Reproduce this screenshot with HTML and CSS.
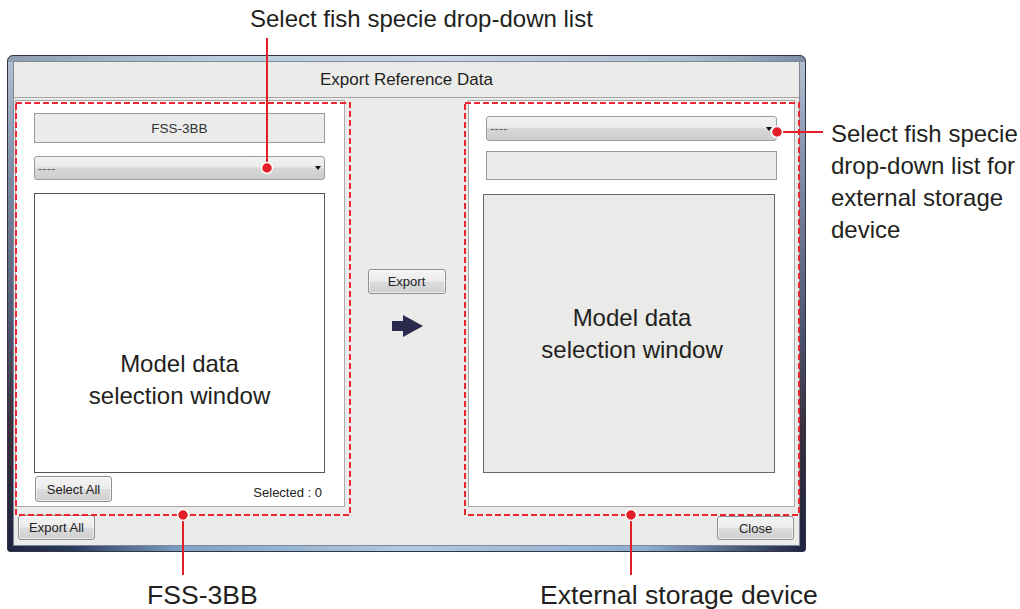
FILE: index.html
```html
<!DOCTYPE html>
<html lang="en">
<head>
<meta charset="utf-8">
<title>Export Reference Data</title>
<link rel="stylesheet" href="styles.css">
</head>
<body>
<div class="page">
  <div class="top-label">Select fish specie drop-down list</div>
  <div class="row">
    <div class="dialog">
      <div class="win">
        <div class="title">Export Reference Data</div>
        <div class="body">
          <div class="panel panel-left">
            <div class="model-box">FSS-3BB</div>
            <div class="combo"><span class="combo-text">----</span><span class="caret"></span></div>
            <div class="list list-left">
              <div class="note">Model data<br>selection window</div>
            </div>
            <div class="panel-foot">
              <button class="btn btn-select">Select All</button>
              <span class="selected">Selected : 0</span>
            </div>
          </div>
          <div class="middle">
            <button class="btn btn-export">Export</button>
            <svg class="arrow" width="31" height="22" viewBox="0 0 31 22"><path d="M0 6 H11 V0 L31 11 L11 22 V16 H0 Z" fill="#2b2a4c"/></svg>
          </div>
          <div class="panel panel-right">
            <div class="combo combo-right"><span class="combo-text">----</span><span class="caret"></span></div>
            <div class="textbox"></div>
            <div class="list list-right">
              <div class="note">Model data<br>selection window</div>
            </div>
          </div>
        </div>
        <div class="footer">
          <button class="btn btn-exportall">Export All</button>
          <button class="btn btn-close">Close</button>
        </div>
      </div>
    </div>
    <div class="side-note">Select fish specie<br>drop-down list for<br>external storage<br>device</div>
  </div>
  <div class="bottom-labels">
    <div>FSS-3BB</div>
    <div>External storage device</div>
  </div>
  <svg class="callouts" width="1020" height="609" viewBox="0 0 1020 609">
    <g fill="none" stroke="#ec2630" stroke-width="2" stroke-dasharray="6 3">
      <rect x="16" y="103" width="334" height="412"/>
      <rect x="465" y="103" width="334" height="412"/>
    </g>
    <g stroke="#e31e26" stroke-width="2">
      <line x1="267" y1="38" x2="267" y2="168"/>
      <line x1="777" y1="132" x2="823" y2="132"/>
      <line x1="183" y1="515" x2="183" y2="575"/>
      <line x1="631" y1="515" x2="631" y2="575"/>
    </g>
    <g fill="#e31e26" stroke="#ffffff" stroke-width="1.5">
      <circle cx="267" cy="168" r="5.5"/>
      <circle cx="777" cy="132" r="5.5"/>
      <circle cx="183" cy="515" r="5.5"/>
      <circle cx="631" cy="515" r="5.5"/>
    </g>
  </svg>
</div>
</body>
</html>
```
FILE: styles.css
```css
body {
  margin: 0;
  background: #ffffff;
  font-family: "Liberation Sans", Arial, sans-serif;
  color: #231f20;
}

.page {
  position: relative;
  width: 1020px;
  height: 609px;
  overflow: hidden;
}

.top-label {
  height: 55px;
  box-sizing: border-box;
  padding: 5px 0 0 250px;
  font-size: 24px;
  line-height: 28px;
  white-space: nowrap;
}

.row {
  display: flex;
  align-items: flex-start;
}

.dialog {
  margin-left: 7px;
  width: 799px;
  height: 497px;
  box-sizing: border-box;
  padding: 5px;
  border: 1px solid #2e3548;
  border-radius: 6px 6px 3px 3px;
  background:
    linear-gradient(90deg, #8e9db2 0%, #b9cbdd 25%, #c9d7e5 55%, #aebfd2 85%, #7d8ca3 100%) top / 100% 6px no-repeat,
    linear-gradient(90deg, #1d2340 0%, #2c3a5c 8%, #7fa2c6 22%, #b2c9e0 50%, #8eaed0 80%, #1d2340 100%) bottom / 100% 6px no-repeat,
    linear-gradient(180deg, #b3c2d3 0%, #7b8aa2 25%, #4d5670 55%, #3a2f3c 75%, #1e2440 100%);
}

.win {
  height: 100%;
  box-sizing: border-box;
  border: 1px solid #7e8898;
  background: #ebebe9;
  display: flex;
  flex-direction: column;
}

.title {
  height: 35px;
  flex: none;
  border-bottom: 1px solid #a3a3a3;
  display: flex;
  align-items: center;
  justify-content: center;
  font-size: 17px;
  color: #1e1e1e;
}

.body {
  display: flex;
  height: 409px;
  flex: none;
  box-sizing: border-box;
  padding: 2px 0 0 1px;
}

.panel {
  background: #ffffff;
  border: 1px solid #a9a9a9;
  box-sizing: border-box;
  height: 407px;
  display: flex;
  flex-direction: column;
}

.panel-left {
  width: 330px;
  padding: 12px 0 0 18px;
}

.panel-right {
  width: 327px;
  padding: 15px 0 0 14px;
}

.middle {
  width: 123px;
  display: flex;
  flex-direction: column;
  align-items: center;
  padding-top: 169px;
  box-sizing: border-box;
}

.arrow {
  margin-top: 21px;
  margin-left: 2px;
  display: block;
}

.model-box {
  width: 291px;
  height: 30px;
  box-sizing: border-box;
  border: 1px solid #9a9a9a;
  background: #ebebeb;
  display: flex;
  align-items: center;
  justify-content: center;
  font-size: 13.5px;
  color: #333;
}

.combo {
  margin-top: 13px;
  width: 291px;
  height: 24px;
  box-sizing: border-box;
  border: 1px solid #9c9c9c;
  border-radius: 3px;
  background: linear-gradient(180deg, #f3f3f3 0%, #eaeaea 45%, #d8d8d8 50%, #cdcdcd 100%);
  display: flex;
  align-items: center;
  justify-content: space-between;
  padding: 0 3px 0 3px;
  font-size: 13px;
  color: #666;
}

.combo-right {
  margin-top: 0;
  margin-left: 3px;
  height: 25px;
  padding-right: 4px;
}

.caret {
  width: 0;
  height: 0;
  border-left: 3.5px solid transparent;
  border-right: 3.5px solid transparent;
  border-top: 4px solid #111;
}

.textbox {
  margin: 10px 0 0 3px;
  width: 291px;
  height: 29px;
  box-sizing: border-box;
  border: 1px solid #9a9a9a;
  background: #ebebeb;
}

.list {
  box-sizing: border-box;
  border: 1px solid #555;
  text-align: center;
}

.list-left {
  margin-top: 13px;
  width: 291px;
  height: 280px;
  background: #ffffff;
  padding-top: 154px;
}

.list-right {
  margin-top: 14px;
  width: 292px;
  height: 279px;
  background: #eaeae8;
  padding-top: 107px;
  padding-left: 6px;
  border-color: #666;
}

.note {
  font-size: 24px;
  line-height: 32px;
  color: #231f20;
}

.panel-foot {
  display: flex;
  align-items: flex-start;
  justify-content: space-between;
  width: 287px;
  margin: 3px 0 0 1px;
}

.selected {
  font-size: 13px;
  color: #222;
  margin-top: 9px;
}

.btn {
  font-family: "Liberation Sans", Arial, sans-serif;
  font-size: 13px;
  color: #222;
  box-sizing: border-box;
  border: 1px solid #8e8f8f;
  border-radius: 3px;
  background: linear-gradient(180deg, #f4f4f4 0%, #ececec 48%, #dcdcdc 52%, #cfcfcf 100%);
  box-shadow: inset 0 0 0 1px rgba(255, 255, 255, 0.6);
  padding: 0;
  margin: 0;
  display: flex;
  align-items: center;
  justify-content: center;
}

.btn-select {
  width: 77px;
  height: 26px;
}

.btn-export {
  width: 78px;
  height: 25px;
}

.footer {
  flex: 1;
  display: flex;
  justify-content: space-between;
  align-items: flex-start;
  padding: 8px 5px 0 4px;
}

.btn-exportall {
  width: 77px;
  height: 25px;
}

.btn-close {
  width: 77px;
  height: 24px;
  margin-top: 1px;
}

.side-note {
  margin-left: 25px;
  margin-top: 62.7px;
  font-size: 24px;
  line-height: 32px;
  white-space: nowrap;
}

.bottom-labels {
  display: grid;
  grid-template-columns: 393px auto;
  padding-left: 147px;
  margin-top: 28px;
  font-size: 26.6px;
  line-height: 30px;
  white-space: nowrap;
}

.callouts {
  position: absolute;
  left: 0;
  top: 0;
  pointer-events: none;
}
```
